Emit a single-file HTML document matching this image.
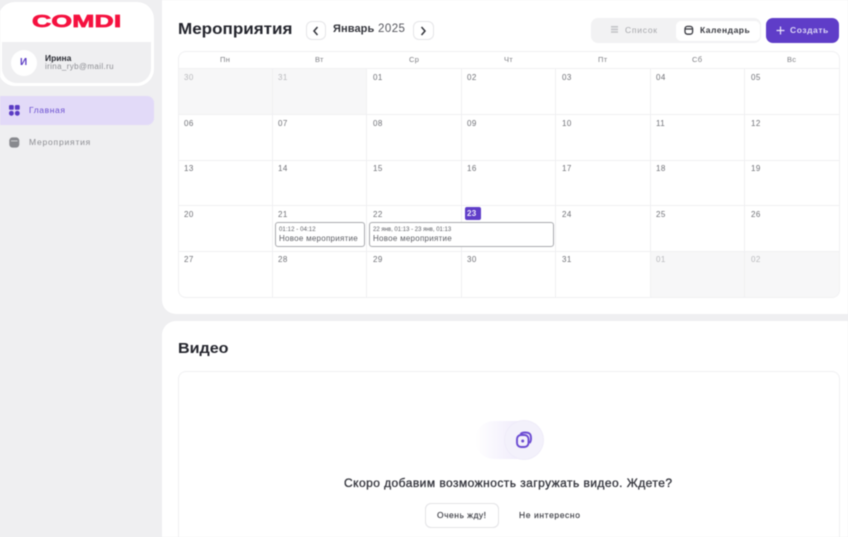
<!DOCTYPE html>
<html lang="ru"><head><meta charset="utf-8"><title>Comdi</title>
<style>
html,body{margin:0;padding:0}
body{width:848px;height:537px;overflow:hidden;background:#efeff1;position:relative;font-family:"Liberation Sans",sans-serif}
#w{position:absolute;left:0;top:0;width:848px;height:537px;overflow:hidden;filter:blur(.45px)}
.a{position:absolute}
.t{position:absolute;white-space:nowrap;line-height:1;transform-origin:0 50%}
.n{font-size:8px;color:#6f7076;letter-spacing:.4px}
.h{font-size:7.5px;color:#808186;letter-spacing:.3px}
.g{color:#b9babd}
.l{position:absolute;background:#f0f0f2}
</style></head><body><div id="w">

<div class="a" style="left:162px;top:-20px;width:700px;height:334px;background:#fff;border-radius:14px"></div>
<div class="a" style="left:162px;top:321px;width:700px;height:240px;background:#fff;border-radius:14px"></div>

<!-- sidebar -->
<div class="a" style="left:-2px;top:2px;width:156px;height:84px;background:#fff;border-radius:17px;overflow:hidden">
  <div class="a" style="left:4px;top:40px;width:149px;height:41px;background:#efeff1;border-radius:0 0 15px 15px"></div>
</div>
<div class="t" style="left:32px;top:13px;font-size:17.5px;font-weight:bold;color:#f5113f;transform:scaleX(1.52);letter-spacing:.1px;-webkit-text-stroke:.7px #f5113f">COMDI</div>
<div class="a" style="left:11px;top:50px;width:26px;height:26px;border-radius:50%;background:#fff"></div>
<div class="t" style="left:20px;top:58px;font-size:10px;font-weight:bold;color:#5b3cc4">И</div>
<div class="t" style="left:45px;top:54px;font-size:8.5px;font-weight:bold;color:#2a2b33">Ирина</div>
<div class="t" style="left:45px;top:63px;font-size:8px;color:#8e8f94;letter-spacing:.36px">irina_ryb@mail.ru</div>

<div class="a" style="left:0;top:96px;width:154px;height:29px;background:#e2daf8;border-radius:0 7px 7px 0"></div>
<svg class="a" style="left:9px;top:105px" width="11" height="11" viewBox="0 0 11 11" fill="#5b3cc4"><rect x="0" y="0" width="4.8" height="4.8" rx="1.3"/><rect x="5.9" y="0" width="4.8" height="4.8" rx="1.3"/><rect x="0" y="5.9" width="4.8" height="4.8" rx="2.2"/><rect x="5.9" y="5.9" width="4.8" height="4.8" rx="2.2"/></svg>
<div class="t" style="left:29px;top:106px;font-size:8.5px;color:#6a4fd0;letter-spacing:.6px">Главная</div>
<svg class="a" style="left:9px;top:137px" width="11" height="11" viewBox="0 0 11 11"><rect x="0.3" y="0.4" width="10" height="10.2" rx="3.2" fill="#88898e"/><rect x="2" y="3.4" width="6.6" height="1" fill="#d0d0d3"/></svg>
<div class="t" style="left:29px;top:138px;font-size:8.5px;color:#8d8e93;letter-spacing:.8px">Мероприятия</div>

<!-- top bar -->
<div class="t" style="left:178px;top:22px;font-size:15.5px;font-weight:bold;color:#24252d;transform:scaleX(1.1)">Мероприятия</div>
<div class="a" style="left:306px;top:21px;width:20px;height:19px;border:1px solid #e6e6e8;border-radius:6px;box-sizing:border-box"></div>
<svg class="a" style="left:312px;top:26px" width="8" height="10" viewBox="0 0 8 10" fill="none" stroke="#33343b" stroke-width="1.5"><path d="M5.5 1 L2 5 L5.5 9"/></svg>
<div class="t" style="left:333px;top:24px;font-size:11.5px;color:#55565d;letter-spacing:.45px"><span style="color:#33343b;font-weight:bold;font-size:11px;letter-spacing:.1px">Январь</span> 2025</div>
<div class="a" style="left:413px;top:21px;width:21px;height:19px;border:1px solid #e6e6e8;border-radius:6px;box-sizing:border-box"></div>
<svg class="a" style="left:419px;top:26px" width="8" height="10" viewBox="0 0 8 10" fill="none" stroke="#33343b" stroke-width="1.5"><path d="M2.5 1 L6 5 L2.5 9"/></svg>

<div class="a" style="left:591px;top:18px;width:170px;height:25px;background:#f2f2f3;border-radius:7px"></div>
<div class="a" style="left:676px;top:21px;width:84px;height:20px;background:#fff;border-radius:5px"></div>
<svg class="a" style="left:610px;top:25px" width="9" height="9" viewBox="0 0 9 9" fill="#c4c5c8"><rect x="1" y="1" width="7" height="1.6"/><rect x="1" y="3.6" width="7" height="1.6"/><rect x="1" y="6.2" width="7" height="1.6"/></svg>
<div class="t" style="left:625px;top:26px;font-size:8.5px;color:#a6a7ab;letter-spacing:.75px">Список</div>
<svg class="a" style="left:684px;top:25px" width="10" height="10" viewBox="0 0 10 10" fill="none" stroke="#3a3b42" stroke-width="1.3"><rect x="1" y="1.4" width="7.6" height="7.8" rx="2.4"/><path d="M1.2 4h7.2"/></svg>
<div class="t" style="left:700px;top:26px;font-size:8.5px;font-weight:bold;color:#3a3b42;letter-spacing:.5px">Календарь</div>
<div class="a" style="left:766px;top:18px;width:73px;height:25px;background:#5f3dc8;border-radius:7px"></div>
<svg class="a" style="left:776px;top:26px" width="9" height="9" viewBox="0 0 9 9" stroke="#e9e4fa" stroke-width="1.2"><path d="M4.5 .5v8M.5 4.5h8"/></svg>
<div class="t" style="left:790px;top:26px;font-size:8.5px;font-weight:bold;color:#dcd5f6;letter-spacing:.55px">Создать</div>

<!-- calendar -->
<div class="a" style="left:178px;top:51px;width:662px;height:247px;border:1px solid #f0f0f2;border-radius:8px;box-sizing:border-box;overflow:hidden">
  <div class="a" style="left:0;top:17px;width:188px;height:46px;background:#f7f7f8"></div>
  <div class="a" style="left:471px;top:199px;width:189px;height:46px;background:#f7f7f8"></div>
</div>
<div class="l" style="left:178px;top:68px;width:661px;height:1px"></div>
<div class="l" style="left:178px;top:114px;width:661px;height:1px"></div>
<div class="l" style="left:178px;top:160px;width:661px;height:1px"></div>
<div class="l" style="left:178px;top:205px;width:661px;height:1px"></div>
<div class="l" style="left:178px;top:251px;width:661px;height:1px"></div>
<div class="l" style="left:272px;top:69px;width:1px;height:228px"></div>
<div class="l" style="left:366px;top:69px;width:1px;height:228px"></div>
<div class="l" style="left:461px;top:69px;width:1px;height:228px"></div>
<div class="l" style="left:555px;top:69px;width:1px;height:228px"></div>
<div class="l" style="left:650px;top:69px;width:1px;height:228px"></div>
<div class="l" style="left:744px;top:69px;width:1px;height:228px"></div>

<div class="t h" style="left:220px;top:56px">Пн</div>
<div class="t h" style="left:315px;top:56px">Вт</div>
<div class="t h" style="left:409px;top:56px">Ср</div>
<div class="t h" style="left:504px;top:56px">Чт</div>
<div class="t h" style="left:598px;top:56px">Пт</div>
<div class="t h" style="left:692px;top:56px">Сб</div>
<div class="t h" style="left:787px;top:56px">Вс</div>

<div class="t n g" style="left:184px;top:74px">30</div>
<div class="t n g" style="left:278px;top:74px">31</div>
<div class="t n" style="left:373px;top:74px">01</div>
<div class="t n" style="left:467px;top:74px">02</div>
<div class="t n" style="left:562px;top:74px">03</div>
<div class="t n" style="left:656px;top:74px">04</div>
<div class="t n" style="left:751px;top:74px">05</div>

<div class="t n" style="left:184px;top:120px">06</div>
<div class="t n" style="left:278px;top:120px">07</div>
<div class="t n" style="left:373px;top:120px">08</div>
<div class="t n" style="left:467px;top:120px">09</div>
<div class="t n" style="left:562px;top:120px">10</div>
<div class="t n" style="left:656px;top:120px">11</div>
<div class="t n" style="left:751px;top:120px">12</div>

<div class="t n" style="left:184px;top:165px">13</div>
<div class="t n" style="left:278px;top:165px">14</div>
<div class="t n" style="left:373px;top:165px">15</div>
<div class="t n" style="left:467px;top:165px">16</div>
<div class="t n" style="left:562px;top:165px">17</div>
<div class="t n" style="left:656px;top:165px">18</div>
<div class="t n" style="left:751px;top:165px">19</div>

<div class="t n" style="left:184px;top:211px">20</div>
<div class="t n" style="left:278px;top:211px">21</div>
<div class="t n" style="left:373px;top:211px">22</div>
<div class="a" style="left:465px;top:207px;width:16px;height:13px;background:#5f3dc8;border-radius:2px"></div>
<div class="t" style="left:467px;top:210px;font-size:8px;font-weight:bold;color:#eeeafc;letter-spacing:.3px">23</div>
<div class="t n" style="left:562px;top:211px">24</div>
<div class="t n" style="left:656px;top:211px">25</div>
<div class="t n" style="left:751px;top:211px">26</div>

<div class="t n" style="left:184px;top:256px">27</div>
<div class="t n" style="left:278px;top:256px">28</div>
<div class="t n" style="left:373px;top:256px">29</div>
<div class="t n" style="left:467px;top:256px">30</div>
<div class="t n" style="left:562px;top:256px">31</div>
<div class="t n g" style="left:656px;top:256px">01</div>
<div class="t n g" style="left:751px;top:256px">02</div>

<div class="a" style="left:275px;top:222px;width:90px;height:25px;background:#fff;border:1px solid #a9aaae;border-radius:3px;box-sizing:border-box"></div>
<div class="t" style="left:279px;top:226.5px;font-size:6px;color:#5c5d63;letter-spacing:.1px">01:12 - 04:12</div>
<div class="t" style="left:279px;top:235px;font-size:8px;color:#5c5d63;letter-spacing:.26px">Новое мероприятие</div>
<div class="a" style="left:369px;top:222px;width:185px;height:25px;background:#fff;border:1px solid #a9aaae;border-radius:3px;box-sizing:border-box"></div>
<div class="t" style="left:373px;top:226.5px;font-size:6px;color:#5c5d63">22 янв, 01:13 - 23 янв, 01:13</div>
<div class="t" style="left:373px;top:235px;font-size:8px;color:#5c5d63;letter-spacing:.26px">Новое мероприятие</div>

<!-- video -->
<div class="t" style="left:178px;top:342px;font-size:14.5px;font-weight:bold;color:#24252d;transform:scaleX(1.11)">Видео</div>
<div class="a" style="left:178px;top:371px;width:662px;height:190px;border:1px solid #f0f0f2;border-radius:8px;box-sizing:border-box"></div>
<div class="a" style="left:475px;top:421px;width:50px;height:38px;border-radius:19px 0 0 19px;background:linear-gradient(90deg,rgba(236,232,251,0),#eee9fb)"></div>
<div class="a" style="left:505px;top:421px;width:38px;height:38px;border-radius:50%;background:#f3f1fb;box-shadow:0 0 0 1px #efecf9"></div>
<svg class="a" style="left:515px;top:431px" width="18" height="18" viewBox="0 0 18 18" fill="none" stroke="#6b4bd2" stroke-width="1.9"><path d="M5.5 3.2 C6.5 1.8 8 1.5 10 1.5 C14.5 1.5 16 3 16 7.5 C16 9.5 15.6 11 14.4 12"/><rect x="2" y="4" width="11.5" height="12" rx="4"/><circle cx="7.7" cy="10" r="1.5" fill="#6b4bd2" stroke="none"/></svg>
<div class="t" style="left:344px;top:477px;font-size:12px;color:#33343c;letter-spacing:.45px;-webkit-text-stroke:.3px #33343c">Скоро добавим возможность загружать видео. Ждете?</div>
<div class="a" style="left:425px;top:503px;width:74px;height:25px;background:#fff;border:1px solid #e3e3e6;border-radius:6px;box-sizing:border-box"></div>
<div class="t" style="left:437px;top:511px;font-size:8.5px;color:#3a3b42;letter-spacing:.5px;-webkit-text-stroke:.15px #3a3b42">Очень жду!</div>
<div class="t" style="left:519px;top:511px;font-size:8.5px;color:#3a3b42;letter-spacing:.6px;-webkit-text-stroke:.15px #3a3b42">Не интересно</div>

</div></body></html>
